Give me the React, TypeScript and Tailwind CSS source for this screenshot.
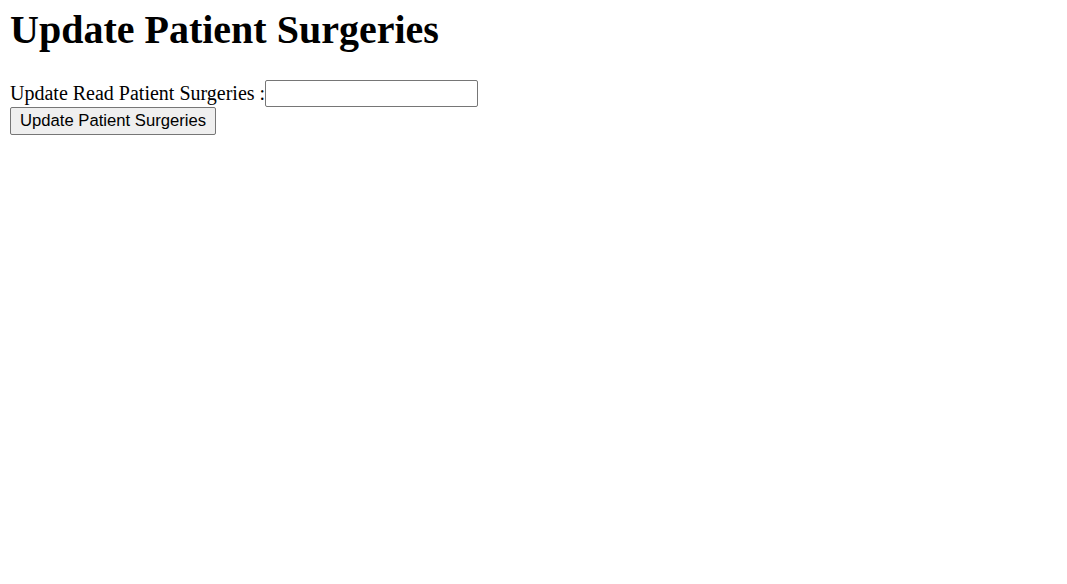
export default function App() {
  return (
    <div className="min-h-screen bg-white px-[10px] pt-[8px] text-black" style={{ fontFamily: '"Liberation Serif", "Times New Roman", serif' }}>
      <h1 className="mb-[28px] text-[40px] font-bold leading-[44px]">Update Patient Surgeries</h1>
      <form>
        <div className="text-[20px] leading-[27px]">
          <label htmlFor="surgeries">Update Read Patient Surgeries :</label>
          <input
            id="surgeries"
            type="text"
            className="h-[27px] w-[213px] rounded-[2px] border border-[#767676] bg-white px-[2px] align-bottom text-[16px] outline-none"
          />
        </div>
        <div>
          <button
            type="submit"
            className="h-[28px] rounded-[2px] border border-[#767676] bg-[#efefef] px-[9px] text-[16.67px] leading-[20px] text-black"
            style={{ fontFamily: '"Liberation Sans", Arial, sans-serif' }}
          >
            Update Patient Surgeries
          </button>
        </div>
      </form>
    </div>
  );
}
